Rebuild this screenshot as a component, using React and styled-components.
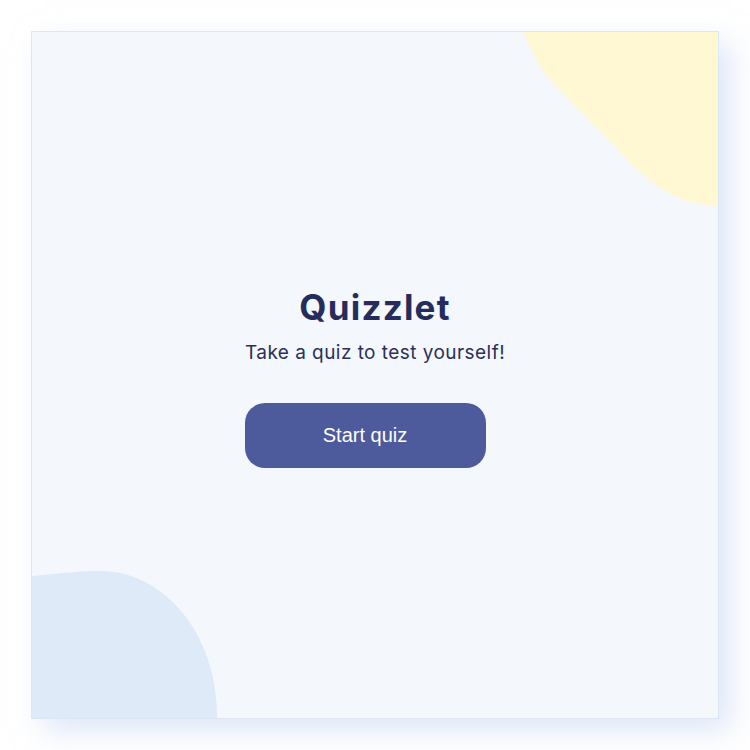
import React from "react";
import styled, { createGlobalStyle } from "styled-components";

const GlobalStyle = createGlobalStyle`
  body {
    margin: 0;
    background: #ffffff;
    font-family: "Inter", "Liberation Sans", sans-serif;
  }
`;

const Page = styled.div`
  width: 750px;
  height: 750px;
  padding: 31px 0 0 31px;
  box-sizing: border-box;
`;

const Card = styled.main`
  position: relative;
  width: 688px;
  height: 688px;
  box-sizing: border-box;
  border: 1px solid #dde7f3;
  background: #f4f7fb;
  box-shadow: 12px 12px 28px rgba(195, 212, 240, 0.55);
  overflow: hidden;
  display: flex;
  flex-direction: column;
  align-items: center;
  justify-content: center;
  padding-top: 2px;
`;

const Blob = styled.svg`
  position: absolute;
  ${(p) => (p.$top ? "top: 0;" : "bottom: 0;")}
  ${(p) => (p.$right ? "right: 0;" : "left: 0;")}
`;

const Title = styled.h1`
  margin: 0;
  font-family: "Inter", sans-serif;
  font-weight: 700;
  font-size: 35px;
  letter-spacing: 1.2px;
  color: #262d5c;
  line-height: 44px;
  position: relative;
`;

const Subtitle = styled.p`
  margin: 12px 0 0;
  font-size: 19px;
  letter-spacing: 0.45px;
  color: #2a3058;
  line-height: 24px;
  position: relative;
`;

const StartButton = styled.button`
  margin: 38px 20px 0 0;
  width: 241px;
  height: 65px;
  border: none;
  border-radius: 20px;
  background: #4d5a9c;
  color: #ffffff;
  font-family: "Liberation Sans", Arial, sans-serif;
  font-size: 20px;
  cursor: pointer;
  position: relative;
`;

const App = () => {
  return (
    <Page>
      <GlobalStyle />
      <Card>
        <Blob $top $right width="194" height="174" viewBox="0 0 194 174">
          <path
            d="M0,0 C8,22 18,40 30,52 L100,124 C125,150 150,172 194,174 L194,0 Z"
            fill="#fff8d2"
          />
        </Blob>
        <Blob width="185" height="147" viewBox="0 0 185 147">
          <path
            d="M0,5 C30,2 50,0 70,0 C125,0 185,55 185,147 L0,147 Z"
            fill="#deeaf8"
          />
        </Blob>
        <Title>Quizzlet</Title>
        <Subtitle>Take a quiz to test yourself!</Subtitle>
        <StartButton>Start quiz</StartButton>
      </Card>
    </Page>
  );
};

export default App;
